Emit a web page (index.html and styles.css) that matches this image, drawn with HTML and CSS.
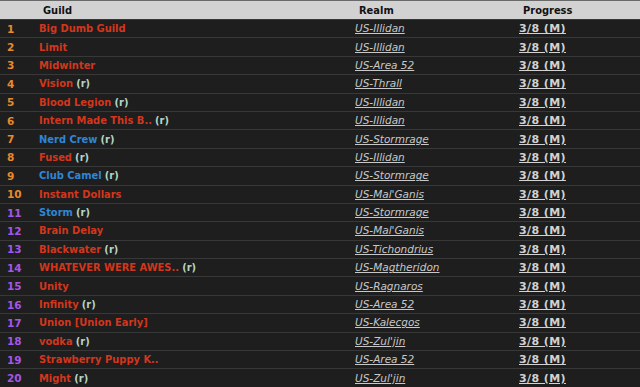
FILE: index.html
```html
<!DOCTYPE html>
<html>
<head>
<meta charset="utf-8">
<link rel="stylesheet" href="styles.css">
</head>
<body>
<table class="ranks">
  <thead>
    <tr>
      <th class="c-rank"></th>
      <th class="c-guild">Guild</th>
      <th class="c-realm">Realm</th>
      <th class="c-prog">Progress</th>
    </tr>
  </thead>
  <tbody>
    <tr><td class="c-rank leg">1</td><td class="c-guild"><span class="g red">Big Dumb Guild</span></td><td class="c-realm"><a>US-Illidan</a></td><td class="c-prog"><a>3/8 (M)</a></td></tr>
    <tr><td class="c-rank leg">2</td><td class="c-guild"><span class="g red">Limit</span></td><td class="c-realm"><a>US-Illidan</a></td><td class="c-prog"><a>3/8 (M)</a></td></tr>
    <tr><td class="c-rank leg">3</td><td class="c-guild"><span class="g red">Midwinter</span></td><td class="c-realm"><a>US-Area 52</a></td><td class="c-prog"><a>3/8 (M)</a></td></tr>
    <tr><td class="c-rank leg">4</td><td class="c-guild"><span class="g red">Vision</span> <span class="r">(r)</span></td><td class="c-realm"><a>US-Thrall</a></td><td class="c-prog"><a>3/8 (M)</a></td></tr>
    <tr><td class="c-rank leg">5</td><td class="c-guild"><span class="g red">Blood Legion</span> <span class="r">(r)</span></td><td class="c-realm"><a>US-Illidan</a></td><td class="c-prog"><a>3/8 (M)</a></td></tr>
    <tr><td class="c-rank leg">6</td><td class="c-guild"><span class="g red">Intern Made This B..</span> <span class="r">(r)</span></td><td class="c-realm"><a>US-Illidan</a></td><td class="c-prog"><a>3/8 (M)</a></td></tr>
    <tr><td class="c-rank leg">7</td><td class="c-guild"><span class="g blue">Nerd Crew</span> <span class="r">(r)</span></td><td class="c-realm"><a>US-Stormrage</a></td><td class="c-prog"><a>3/8 (M)</a></td></tr>
    <tr><td class="c-rank leg">8</td><td class="c-guild"><span class="g red">Fused</span> <span class="r">(r)</span></td><td class="c-realm"><a>US-Illidan</a></td><td class="c-prog"><a>3/8 (M)</a></td></tr>
    <tr><td class="c-rank leg">9</td><td class="c-guild"><span class="g blue">Club Camel</span> <span class="r">(r)</span></td><td class="c-realm"><a>US-Stormrage</a></td><td class="c-prog"><a>3/8 (M)</a></td></tr>
    <tr><td class="c-rank leg">10</td><td class="c-guild"><span class="g red">Instant Dollars</span></td><td class="c-realm"><a>US-Mal'Ganis</a></td><td class="c-prog"><a>3/8 (M)</a></td></tr>
    <tr><td class="c-rank epic">11</td><td class="c-guild"><span class="g blue">Storm</span> <span class="r">(r)</span></td><td class="c-realm"><a>US-Stormrage</a></td><td class="c-prog"><a>3/8 (M)</a></td></tr>
    <tr><td class="c-rank epic">12</td><td class="c-guild"><span class="g red">Brain Delay</span></td><td class="c-realm"><a>US-Mal'Ganis</a></td><td class="c-prog"><a>3/8 (M)</a></td></tr>
    <tr><td class="c-rank epic">13</td><td class="c-guild"><span class="g red">Blackwater</span> <span class="r">(r)</span></td><td class="c-realm"><a>US-Tichondrius</a></td><td class="c-prog"><a>3/8 (M)</a></td></tr>
    <tr><td class="c-rank epic">14</td><td class="c-guild"><span class="g red">WHATEVER WERE AWES..</span> <span class="r">(r)</span></td><td class="c-realm"><a>US-Magtheridon</a></td><td class="c-prog"><a>3/8 (M)</a></td></tr>
    <tr><td class="c-rank epic">15</td><td class="c-guild"><span class="g red">Unity</span></td><td class="c-realm"><a>US-Ragnaros</a></td><td class="c-prog"><a>3/8 (M)</a></td></tr>
    <tr><td class="c-rank epic">16</td><td class="c-guild"><span class="g red">Infinity</span> <span class="r">(r)</span></td><td class="c-realm"><a>US-Area 52</a></td><td class="c-prog"><a>3/8 (M)</a></td></tr>
    <tr><td class="c-rank epic">17</td><td class="c-guild"><span class="g red">Union [Union Early]</span></td><td class="c-realm"><a>US-Kalecgos</a></td><td class="c-prog"><a>3/8 (M)</a></td></tr>
    <tr><td class="c-rank epic">18</td><td class="c-guild"><span class="g red">vodka</span> <span class="r">(r)</span></td><td class="c-realm"><a>US-Zul'jin</a></td><td class="c-prog"><a>3/8 (M)</a></td></tr>
    <tr><td class="c-rank epic">19</td><td class="c-guild"><span class="g red">Strawberry Puppy K..</span></td><td class="c-realm"><a>US-Area 52</a></td><td class="c-prog"><a>3/8 (M)</a></td></tr>
    <tr><td class="c-rank epic">20</td><td class="c-guild"><span class="g red">Might</span> <span class="r">(r)</span></td><td class="c-realm"><a>US-Zul'jin</a></td><td class="c-prog"><a>3/8 (M)</a></td></tr>
  </tbody>
</table>
</body>
</html>
```

FILE: styles.css
```css
html, body {
  margin: 0;
  padding: 0;
  background: #1e1e1e;
}
body {
  font-family: "DejaVu Sans Condensed", "DejaVu Sans", sans-serif;
  font-size: 11px;
  overflow: hidden;
}
.ranks {
  width: 640px;
  border-collapse: collapse;
  table-layout: fixed;
}
.ranks th,
.ranks td {
  box-sizing: border-box;
  white-space: nowrap;
}
.ranks th {
  height: 19px;
  background: #d2d2d2;
  border-top: 1px solid #6a6a6a;
  color: #111;
  font-weight: bold;
  text-align: left;
  padding: 0 0 0 7px;
}
.ranks td {
  height: 18.4px;
  border-top: 1px solid #383838;
  background: #1e1e1e;
  padding: 0 0 0 3px;
}
.c-rank { width: 36px; }
.c-guild { width: 316px; }
.c-realm { width: 164px; }
.c-prog { width: 124px; }
.ranks td.c-rank {
  padding-left: 7px;
  font-weight: bold;
  font-family: "DejaVu Sans", sans-serif;
  font-size: 10.5px;
}
.leg { color: #e8892c; }
.epic { color: #a556e6; }
.g { font-weight: bold; }
.red { color: #d3361c; }
.blue { color: #2f86d6; }
.r { color: #b4d4c4; font-weight: bold; }
.c-realm a {
  color: #c8c8c8;
  font-family: "DejaVu Sans", sans-serif;
  font-size: 10.5px;
  font-style: italic;
  text-decoration: underline;
}
.c-prog a {
  color: #d2d2d2;
  font-family: "DejaVu Sans", sans-serif;
  font-size: 11px;
  letter-spacing: 0.4px;
  font-weight: bold;
  text-decoration: underline;
}
```
